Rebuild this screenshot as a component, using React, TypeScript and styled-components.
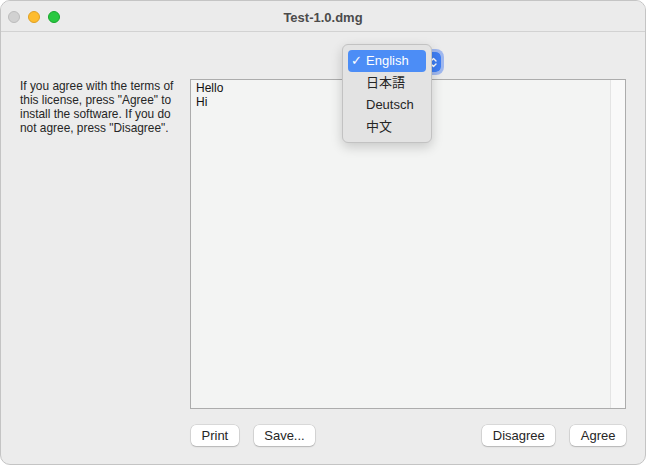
import React from "react"
import styled, { createGlobalStyle } from "styled-components"

const GlobalStyle = createGlobalStyle`
  html, body {
    margin: 0;
    padding: 0;
    background: #ffffff;
  }
  body {
    font-family: "Liberation Sans", Arial, sans-serif;
    -webkit-font-smoothing: antialiased;
  }
`

const languages = ["English", "日本語", "Deutsch", "中文"]

const App = () => {
  return (
    <>
      <GlobalStyle />
      <Window>
        <TitleBar>
          <Lights>
            <Light $color="#d1d1d1" $edge="#bcbcbc" />
            <Light $color="#febc2e" $edge="#dfa023" />
            <Light $color="#28c840" $edge="#17a62c" />
          </Lights>
          <Title>Test-1.0.dmg</Title>
        </TitleBar>
        <Body>
          <PopupRow>
            <PopupWrap>
              {/* the popup's own label sits under the open menu */}
              <PopupButton>
                <PopupArrows>
                  <svg width="7" height="11" viewBox="0 0 7 11">
                    <path d="M1 4 L3.5 1.5 L6 4 M1 7 L3.5 9.5 L6 7" fill="none" stroke="#fff" strokeWidth="1.4" strokeLinecap="round" strokeLinejoin="round" />
                  </svg>
                </PopupArrows>
              </PopupButton>
              <Menu>
                {languages.map((lang, i) => (
                  <MenuItem key={lang} $active={i === 0}>
                    <Check>{i === 0 ? "✓" : ""}</Check>
                    {lang}
                  </MenuItem>
                ))}
              </Menu>
            </PopupWrap>
          </PopupRow>
          <Notice>
            If you agree with the terms of this license, press "Agree" to install the software. If you do not agree, press "Disagree".
          </Notice>
          <LicenseBox>
            <LicenseText>
              Hello
              <br />
              Hi
            </LicenseText>
            <ScrollTrack />
          </LicenseBox>
          <ButtonRow>
            <ButtonGroup>
              <Button>Print</Button>
              <Button>Save...</Button>
            </ButtonGroup>
            <ButtonGroup>
              <Button>Disagree</Button>
              <Button>Agree</Button>
            </ButtonGroup>
          </ButtonRow>
        </Body>
      </Window>
    </>
  )
}

const Window = styled.div`
  width: 646px;
  height: 465px;
  box-sizing: border-box;
  border: 1px solid #c4c4c4;
  border-radius: 10px;
  background: #ececec;
  display: flex;
  flex-direction: column;
  overflow: hidden;
`
const TitleBar = styled.div`
  height: 30px;
  flex: none;
  border-bottom: 1px solid #d2d2d2;
  background: #ebebeb;
  display: flex;
  align-items: center;
  justify-content: center;
  position: relative;
`
const Lights = styled.div`
  position: absolute;
  left: 7px;
  top: 10px;
  display: flex;
  gap: 8px;
`
const Light = styled.span<{ $color: string; $edge: string }>`
  display: block;
  width: 12px;
  height: 12px;
  box-sizing: border-box;
  border-radius: 50%;
  background: ${(p) => p.$color};
  border: 0.5px solid ${(p) => p.$edge};
`
const Title = styled.div`
  font-size: 13px;
  font-weight: 700;
  color: #4b4b4b;
  padding-top: 2px;
`
const Body = styled.div`
  flex: 1;
  display: grid;
  grid-template-columns: 170px 436px;
  grid-template-rows: 20px 330px 21px;
  row-gap: 7px;
  padding: 20px 0 0 19px;
  & > :last-child {
    margin-top: 9px;
  }
`
const PopupRow = styled.div`
  grid-column: 2;
  display: flex;
  padding-left: 158px;
`
const PopupWrap = styled.div`
  position: relative;
`
const PopupButton = styled.div`
  width: 93px;
  height: 20px;
  box-sizing: border-box;
  border-radius: 5px;
  background: #ffffff;
  box-shadow: 0 0 0 3px rgba(98, 142, 243, 0.55);
  display: flex;
  justify-content: flex-end;
  overflow: hidden;
`
const PopupArrows = styled.span`
  width: 16px;
  height: 100%;
  background: #3f7ef3;
  display: flex;
  align-items: center;
  justify-content: center;
`
const Menu = styled.div`
  position: absolute;
  left: -6px;
  top: -8px;
  width: 90px;
  height: 99px;
  box-sizing: border-box;
  padding: 5px;
  border-radius: 6px;
  background: #e3e3e3;
  border: 1px solid #c2c2c2;
  box-shadow: 0 4px 12px rgba(0, 0, 0, 0.18);
  display: flex;
  flex-direction: column;
`
const MenuItem = styled.div<{ $active?: boolean }>`
  height: 22px;
  line-height: 22px;
  border-radius: 4px;
  display: flex;
  align-items: center;
  font-size: 13px;
  color: ${(p) => (p.$active ? "#ffffff" : "#262626")};
  background: ${(p) => (p.$active ? "#4c8df6" : "transparent")};
  font-family: "Liberation Sans", "Noto Sans CJK JP", sans-serif;
`
const Check = styled.span`
  width: 18px;
  padding-left: 3px;
  box-sizing: border-box;
  font-size: 13px;
  font-family: "DejaVu Sans", sans-serif;
`
const Notice = styled.p`
  grid-column: 1;
  grid-row: 2;
  margin: 0;
  width: 162px;
  font-size: 11.9px;
  line-height: 14px;
  color: #262626;
`
const LicenseBox = styled.div`
  grid-column: 2;
  grid-row: 2;
  display: flex;
  box-sizing: border-box;
  border: 1px solid #acacac;
  background: #f3f4f3;
`
const LicenseText = styled.div`
  flex: 1;
  padding: 1px 5px;
  font-size: 12px;
  line-height: 14px;
  color: #111;
`
const ScrollTrack = styled.div`
  width: 14px;
  background: #f9f9f9;
  border-left: 1px solid #e4e4e4;
`
const ButtonRow = styled.div`
  grid-column: 2;
  grid-row: 3;
  display: flex;
  justify-content: space-between;
  padding-left: 1px;
`
const ButtonGroup = styled.div`
  display: flex;
  gap: 15px;
`
const Button = styled.button`
  height: 21px;
  padding: 0 10.5px;
  border: none;
  border-radius: 5px;
  background: #ffffff;
  box-shadow: 0 0 0 0.5px rgba(0, 0, 0, 0.16), 0 1px 1.5px rgba(0, 0, 0, 0.16);
  font-family: "Liberation Sans", Arial, sans-serif;
  font-size: 13px;
  color: #262626;
`

export default App
